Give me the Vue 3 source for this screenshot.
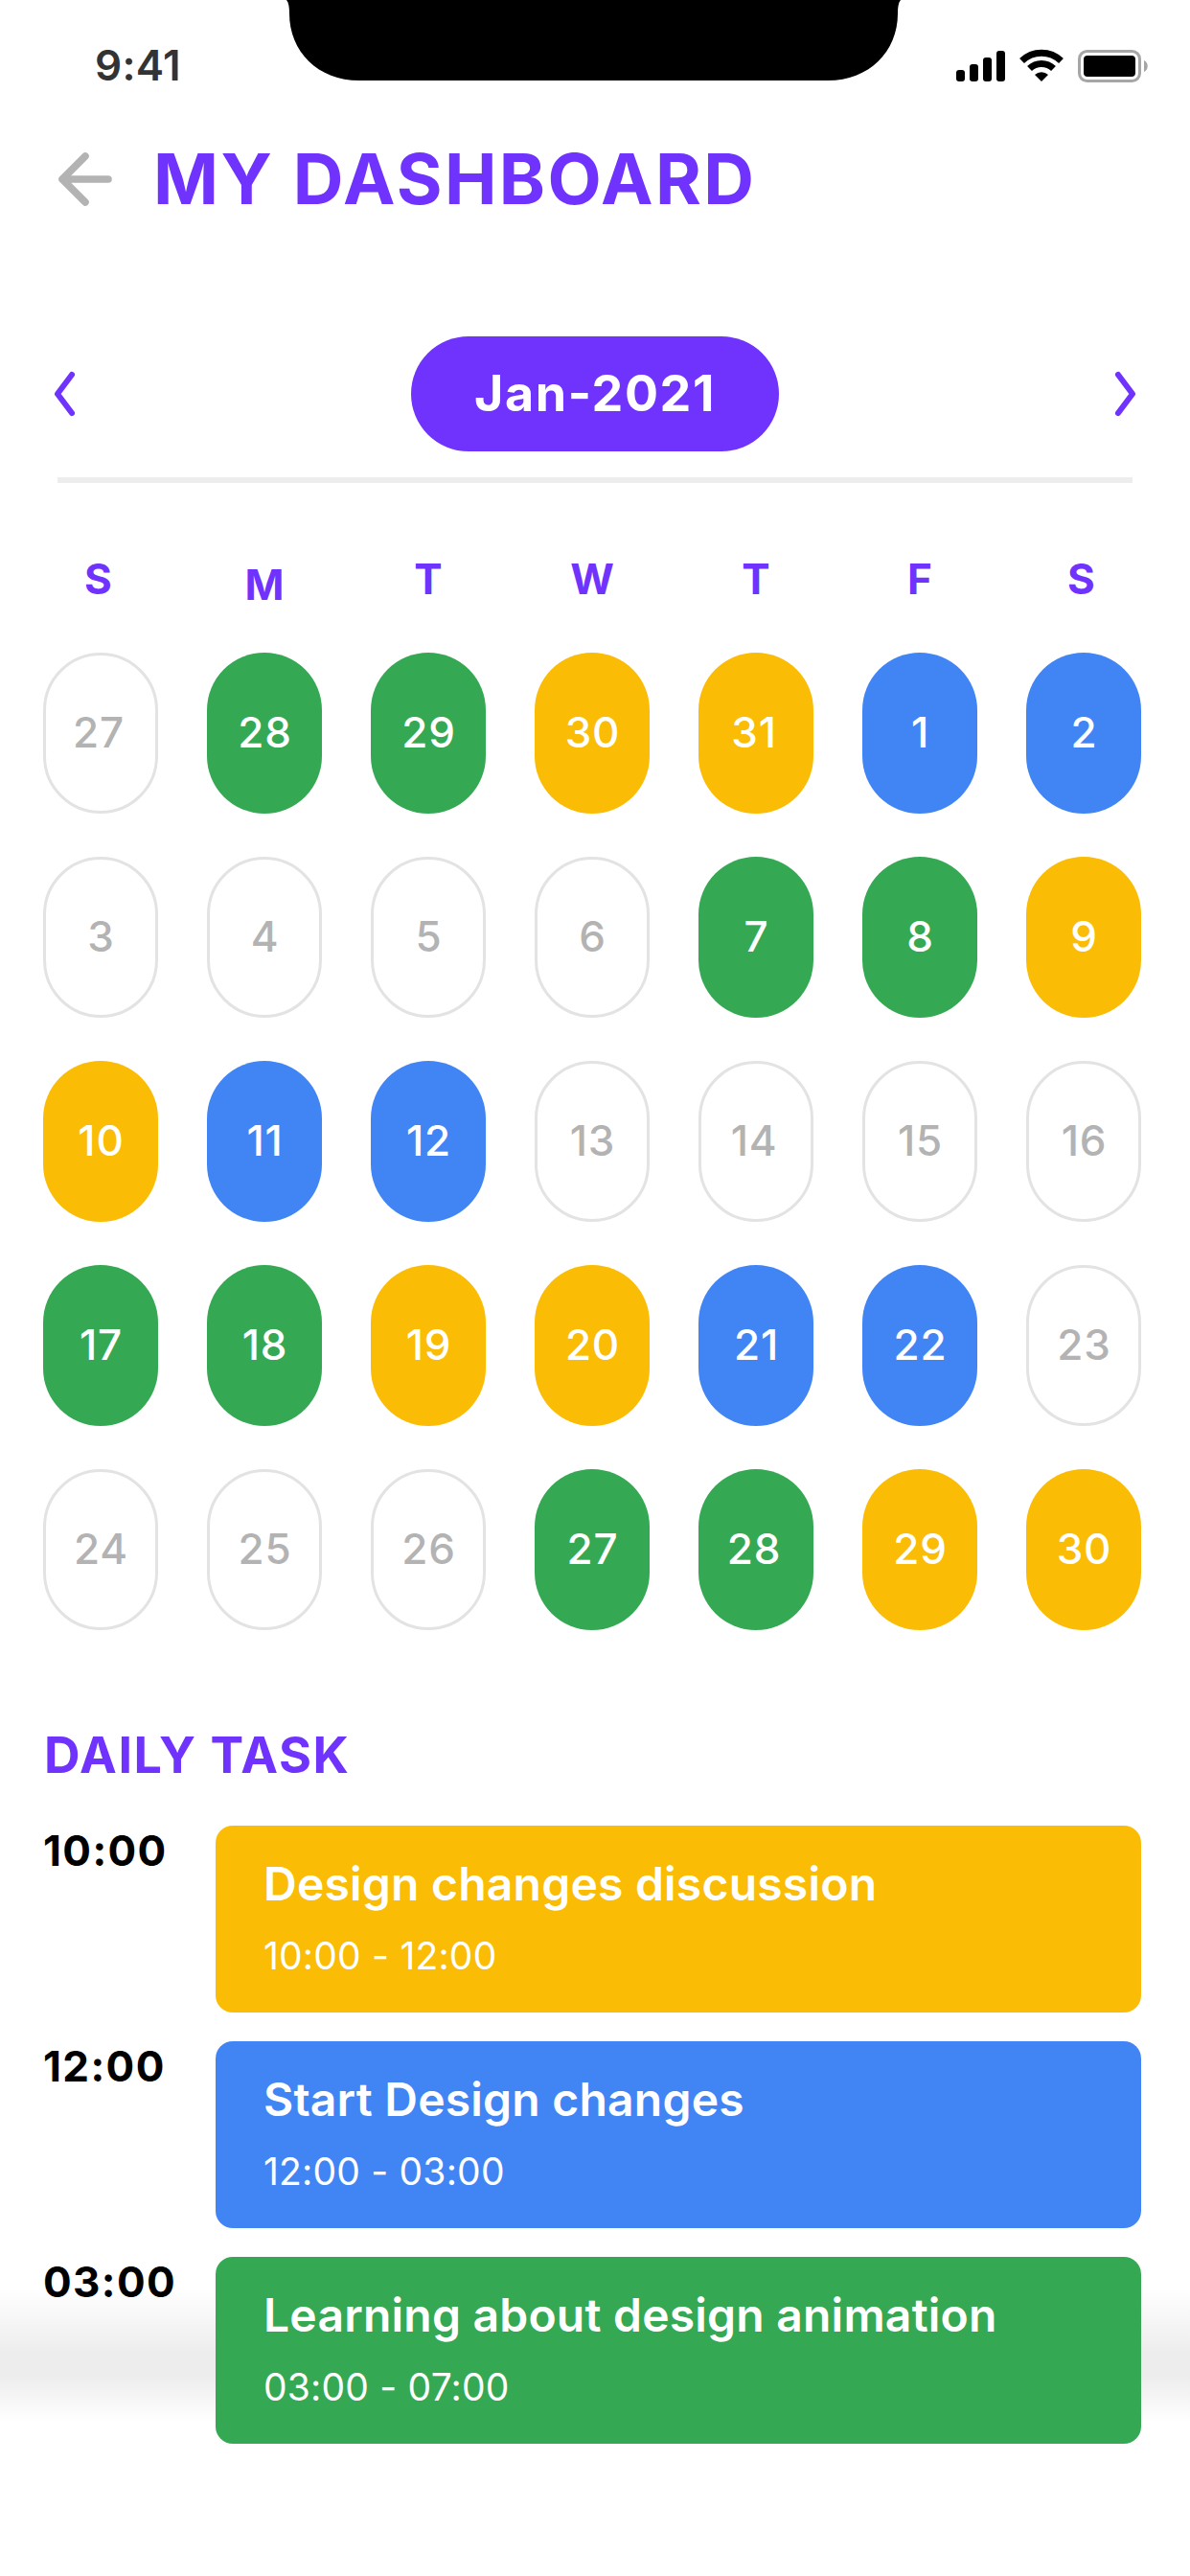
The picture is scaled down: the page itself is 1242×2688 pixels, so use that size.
<template>
  <div class="screen">
    <header class="status-bar">
      <span class="clock">9:41</span>
      <svg class="notch" viewBox="0 0 642 84">
        <path d="M0 0C2.500 3 3 8 3 14C3 54 33 84 76 84H565C608 84 638 54 638 14C638 8 638.500 3 641 0Z" />
      </svg>
      <svg class="status-icons" viewBox="0 0 202 36">
        <rect x="0" y="22" width="9" height="12" rx="3" />
        <rect x="14" y="16" width="9" height="18" rx="3" />
        <rect x="28" y="9" width="9" height="25" rx="3" />
        <rect x="42" y="2" width="9" height="32" rx="3" />
        <path class="wave" d="M68.500 12.500A29.500 29.500 0 0 1 109.500 12.500" />
        <path class="wave" d="M76.500 20.500A18 18 0 0 1 101.500 20.500" />
        <path d="M82 27A10.500 10.500 0 0 1 96 27L89 34Z" />
        <rect class="battery" x="128.500" y="2.500" width="63" height="31" rx="8" />
        <rect x="133" y="7" width="54" height="22" rx="4" />
        <path class="battery-tip" d="M196 12C201 14 201 22 196 24Z" />
      </svg>
    </header>

    <div class="title-row">
      <svg class="back" viewBox="0 0 60 60">
        <path d="M31 6L7 30L31 54M7 30H55" />
      </svg>
      <h1>MY DASHBOARD</h1>
    </div>

    <div class="month-bar">
      <svg class="chevron" viewBox="0 0 24 48">
        <path d="M20 4L5 24L20 44" />
      </svg>
      <span class="month">Jan-2021</span>
      <svg class="chevron" viewBox="0 0 24 48">
        <path d="M4 4L19 24L4 44" />
      </svg>
    </div>

    <div class="calendar">
      <span
        v-for="(name, i) in weekdays"
        :key="'w' + i"
        class="weekday"
        :class="{ low: name === 'M', nudge: name === 'S' }"
      >{{ name }}</span>
      <span
        v-for="(day, i) in days"
        :key="i"
        class="day"
        :class="[day.type, { nudge: day.nudge }]"
      >{{ day.date }}</span>
    </div>

    <section class="tasks">
      <h2>DAILY TASK</h2>
      <div v-for="task in tasks" :key="task.time" class="task">
        <span class="task-time">{{ task.time }}</span>
        <div class="task-card" :class="task.type">
          <h3>{{ task.title }}</h3>
          <p>{{ task.range }}</p>
        </div>
      </div>
    </section>
  </div>
</template>

<script setup>
const weekdays = ['S', 'M', 'T', 'W', 'T', 'F', 'S']

// [date, colour, nudged slightly to the left]
const weeks = [
  [[27, '', true], [28, 'green'], [29, 'green'], [30, 'yellow'], [31, 'yellow', true], [1, 'blue'], [2, 'blue']],
  [[3, ''], [4, ''], [5, ''], [6, ''], [7, 'green'], [8, 'green'], [9, 'yellow']],
  [[10, 'yellow'], [11, 'blue'], [12, 'blue'], [13, ''], [14, '', true], [15, ''], [16, '']],
  [[17, 'green'], [18, 'green'], [19, 'yellow'], [20, 'yellow'], [21, 'blue'], [22, 'blue'], [23, '']],
  [[24, ''], [25, ''], [26, ''], [27, 'green'], [28, 'green', true], [29, 'yellow'], [30, 'yellow']]
]

const days = weeks.flat().map(([date, type, nudge]) => ({ date, type, nudge }))

const tasks = [
  { time: '10:00', title: 'Design changes discussion', range: '10:00 - 12:00', type: 'yellow' },
  { time: '12:00', title: 'Start Design changes', range: '12:00 - 03:00', type: 'blue' },
  { time: '03:00', title: 'Learning about design animation', range: '03:00 - 07:00', type: 'green' }
]
</script>

<style>
body {
  margin: 0;
  background: #fff;
}
</style>

<style scoped>
.screen {
  width: 1242px;
  height: 2688px;
  overflow: hidden;
  font-family: Inter, 'Liberation Sans', sans-serif;
  background: linear-gradient(transparent 2388px, #ededed 2455px, #ededed 2480px, transparent 2528px) #fff;
}

h1, h2, h3, p {
  margin: 0;
}

.status-bar {
  display: flex;
  align-items: flex-start;
  height: 136px;
}

.clock {
  width: 200px;
  margin-top: 38px;
  padding-left: 99px;
  font-size: 44px;
  line-height: 60px;
  font-weight: 600;
  letter-spacing: 0.3px;
  color: #333;
}

.notch {
  width: 642px;
  height: 84px;
}

.status-icons {
  width: 202px;
  height: 36px;
  margin: 51px 0 0 57px;
}

.wave {
  fill: none;
  stroke: #000;
  stroke-width: 7;
}

.battery {
  fill: none;
  stroke: #a6a6a6;
  stroke-width: 3;
}

.battery-tip {
  fill: #a6a6a6;
}

.title-row {
  display: flex;
  align-items: center;
  height: 102px;
  padding-left: 58px;
}

.back {
  width: 60px;
  height: 60px;
  fill: none;
  stroke: #b3b3b3;
  stroke-width: 7.6;
  stroke-linecap: round;
  stroke-linejoin: round;
}

h1 {
  margin-left: 42px;
  font-size: 73px;
  font-weight: 700;
  line-height: 102px;
  letter-spacing: 2.4px;
  color: #7033fd;
  white-space: nowrap;
}

.month-bar {
  display: flex;
  align-items: center;
  justify-content: space-between;
  height: 120px;
  margin: 113px 60px 0;
  padding-bottom: 27px;
  border-bottom: 6px solid #ededed;
}

.chevron {
  width: 24px;
  height: 48px;
  margin: 0 -5px;
  fill: none;
  stroke: #7033fd;
  stroke-width: 6;
  stroke-linecap: round;
  stroke-linejoin: round;
}

.month {
  width: 384px;
  border-radius: 60px;
  font-size: 52px;
  font-weight: 700;
  line-height: 120px;
  letter-spacing: 1.6px;
  text-align: center;
  color: #fff;
  background: #7033fd;
}

.calendar {
  display: grid;
  grid-template-columns: repeat(7, 120px);
  grid-template-rows: 60px;
  grid-auto-rows: 168px;
  gap: 45px 51px;
  margin: 72px 0 0 45px;
}

.weekday {
  font-size: 44px;
  font-weight: 700;
  line-height: 56px;
  text-align: center;
  color: #7033fd;
}

.weekday.low {
  padding-top: 6px;
}

.day {
  box-sizing: border-box;
  padding-left: 1px;
  border: 3px solid #e3e3e3;
  border-radius: 60px;
  font-size: 44px;
  font-weight: 500;
  line-height: 160px;
  letter-spacing: 0.8px;
  text-align: center;
  color: #b3b3b3;
}

.nudge {
  padding-right: 5px;
}

.day.green, .day.yellow, .day.blue {
  border: none;
  line-height: 166px;
  color: #fff;
}

.green {
  background: #35a853;
}

.yellow {
  background: #fabc05;
}

.blue {
  background: #4185f5;
}

.tasks {
  margin: 97px 51px 0 45px;
}

h2 {
  height: 107px;
  padding-left: 1px;
  font-size: 52px;
  font-weight: 700;
  line-height: 68px;
  letter-spacing: 1.6px;
  color: #7033fd;
}

.task {
  display: flex;
  height: 195px;
  margin-bottom: 30px;
}

.task-time {
  width: 180px;
  font-size: 44px;
  font-weight: 700;
  line-height: 52px;
  letter-spacing: 1.4px;
  color: #000;
}

.task-card {
  flex: 1;
  padding: 31px 50px;
  border-radius: 18px;
  box-sizing: border-box;
  color: #fff;
}

h3 {
  font-size: 48px;
  font-weight: 600;
  line-height: 60px;
  letter-spacing: 0.22px;
}

.task-card p {
  margin-top: 20px;
  font-size: 39px;
  line-height: 50px;
  letter-spacing: 0.2px;
}
</style>
